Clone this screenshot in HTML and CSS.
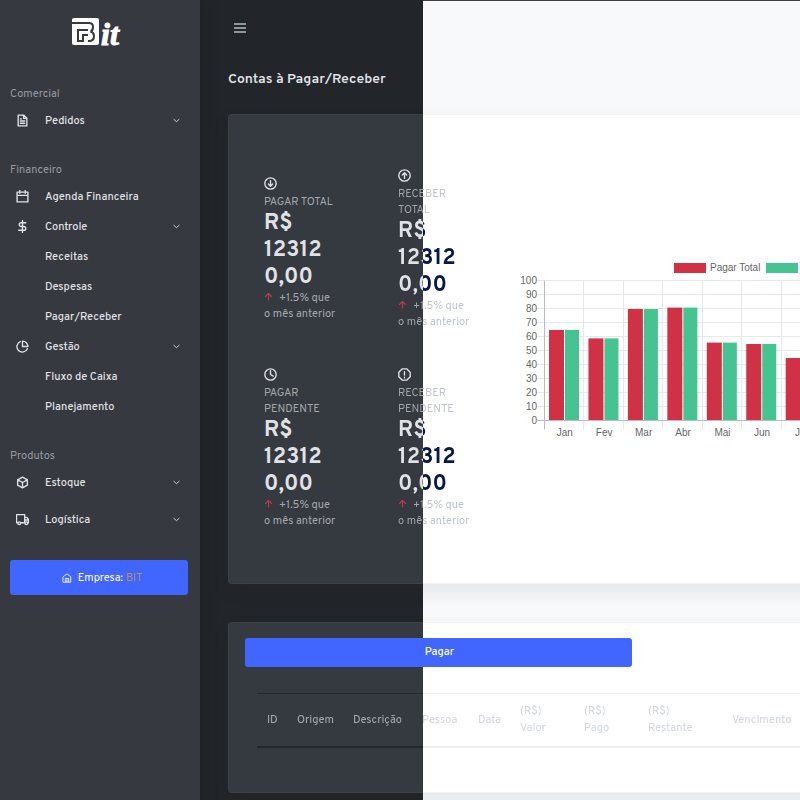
FILE: index.html
```html
<!DOCTYPE html>
<html lang="pt-BR">
<head>
<meta charset="utf-8">
<meta name="viewport" content="width=device-width, initial-scale=1">
<title>Contas à Pagar/Receber</title>
<link rel="stylesheet" href="styles.css">
</head>
<body>
<svg class="defs" aria-hidden="true">
  <symbol id="chevron" viewBox="0 0 24 24"><path d="M3 8l9 8 9-8"/></symbol>
  <symbol id="up" viewBox="0 0 24 24"><path d="M12 21V4M4 12l8-8 8 8"/></symbol>
</svg>
<div class="layout">
  <aside class="sidebar">
    <a class="logo" href="#" aria-label="Bit">
      <svg viewBox="0 0 27 27" width="27" height="27"><rect width="27" height="27" rx="2"/><path d="M0 5H17q4 0 4 4t-2.500 4.500q3.500 1 3.500 4.500 0 5-5 5h-1M6 12h10M6 11v12h5v-6h5"/></svg>
      <span>it</span>
    </a>
    <nav>
      <section class="group">
        <h2>Comercial</h2>
        <ul>
          <li><a href="#"><svg class="icon" viewBox="0 0 24 24"><path d="M14 2H4v20h16V8zM14 2v6h6M8 9h2M8 13h8M8 17h8"/></svg>Pedidos<svg class="chev"><use href="#chevron"/></svg></a></li>
        </ul>
      </section>
      <section class="group">
        <h2>Financeiro</h2>
        <ul>
          <li><a href="#"><svg class="icon" viewBox="0 0 24 24"><path d="M2 4h20v18H2zM2 10h20M7 1v5M17 1v5"/></svg>Agenda Financeira</a></li>
          <li><a href="#"><svg class="icon" viewBox="0 0 24 24"><path d="M12 1v22M18 5H9.500a3.500 3.500 0 0 0 0 7h5a3.500 3.500 0 0 1 0 7H5"/></svg>Controle<svg class="chev"><use href="#chevron"/></svg></a></li>
          <li><a class="sub" href="#">Receitas</a></li>
          <li><a class="sub" href="#">Despesas</a></li>
          <li><a class="sub" href="#">Pagar/Receber</a></li>
          <li><a href="#"><svg class="icon" viewBox="0 0 24 24"><path d="M21 16A10 10 0 1 1 8 3M22 12A10 10 0 0 0 12 2v10z"/></svg>Gestão<svg class="chev"><use href="#chevron"/></svg></a></li>
          <li><a class="sub" href="#">Fluxo de Caixa</a></li>
          <li><a class="sub" href="#">Planejamento</a></li>
        </ul>
      </section>
      <section class="group">
        <h2>Produtos</h2>
        <ul class="spaced">
          <li><a href="#"><svg class="icon" viewBox="0 0 24 24"><path d="M12 2l9 5v10l-9 5-9-5V7zM3 7l9 5 9-5M12 12v10"/></svg>Estoque<svg class="chev"><use href="#chevron"/></svg></a></li>
          <li><a href="#"><svg class="icon" viewBox="0 0 24 24"><path d="M3 18H1V3h15v15H9M16 8h4l3 4v6h-1M16 18v-5h7"/><circle cx="6" cy="19" r="2.500"/><circle cx="19" cy="19" r="2.500"/></svg>Logística<svg class="chev"><use href="#chevron"/></svg></a></li>
        </ul>
      </section>
    </nav>
    <button class="btn company" type="button"><svg viewBox="0 0 24 24"><path d="M3 9l9-7 9 7v13H3zM8 22v-9h8v9M12 14v8"/></svg><span>Empresa: <b>BIT</b></span></button>
  </aside>
  <main class="main">
    <button class="menu" type="button" aria-label="Menu"><i></i><i></i><i></i></button>
    <h1>Contas à Pagar/Receber</h1>
    <div class="content">
      <section class="card summary">
        <div class="metrics">
          <article>
            <svg class="micon" viewBox="0 0 24 24"><circle cx="12" cy="12" r="10.500"/><path d="M12 7v10M8 13l4 4 4-4"/></svg>
            <h3>PAGAR TOTAL</h3>
            <p class="value">R$<br>12312<br>0,00</p>
            <p class="note"><svg><use href="#up"/></svg>+1.5% que<br>o mês anterior</p>
          </article>
          <article>
            <svg class="micon" viewBox="0 0 24 24"><circle cx="12" cy="12" r="10.500"/><path d="M12 17V7M8 11l4-4 4 4"/></svg>
            <h3 class="split muted">RECEBER<br>TOTAL</h3>
            <p class="value split strong">R$<br>12312<br>0,00</p>
            <p class="note split muted"><svg><use href="#up"/></svg>+1.5% que<br>o mês anterior</p>
          </article>
          <article>
            <svg class="micon" viewBox="0 0 24 24"><circle cx="12" cy="12" r="10.500"/><path d="M12 5v7l5 3"/></svg>
            <h3>PAGAR<br>PENDENTE</h3>
            <p class="value">R$<br>12312<br>0,00</p>
            <p class="note"><svg><use href="#up"/></svg>+1.5% que<br>o mês anterior</p>
          </article>
          <article>
            <svg class="micon" viewBox="0 0 24 24"><path d="M8 1.500h8L22.500 8v8L16 22.500H8L1.500 16V8zM12 7v6M12 17v1"/></svg>
            <h3 class="split muted">RECEBER<br>PENDENTE</h3>
            <p class="value split strong">R$<br>12312<br>0,00</p>
            <p class="note split muted"><svg><use href="#up"/></svg>+1.5% que<br>o mês anterior</p>
          </article>
        </div>
        <svg class="chart" id="chart" width="312" height="190" role="img" aria-label="Pagar Total por mês"></svg>
      </section>
      <section class="card">
        <button class="btn pay" type="button">Pagar</button>
        <div class="rules">
          <table>
            <colgroup><col class="c30"><col class="c56"><col class="c69"><col class="c56"><col class="c42"><col class="c64"><col class="c64"><col class="c84"><col></colgroup>
            <thead><tr class="split faint"><th>ID</th><th>Origem</th><th>Descrição</th><th>Pessoa</th><th>Data</th><th>(R$)<br>Valor</th><th>(R$)<br>Pago</th><th>(R$)<br>Restante</th><th>Vencimento</th></tr></thead>
          </table>
        </div>
      </section>
    </div>
  </main>
</div>
<script src="chart.js"></script>
</body>
</html>
```
FILE: styles.css
```css
:root {
  --seam: 52.9vw;
  --blue: #4166ff;
  --page: linear-gradient(90deg, #222529 var(--seam), #f8f9fb var(--seam)) fixed;
  --topline: linear-gradient(90deg, transparent var(--seam), #453f42 var(--seam)) 0 0 / 100% 1px no-repeat fixed;
  --card: linear-gradient(90deg, #353a40 var(--seam), #fff var(--seam)) fixed;
  --rule: linear-gradient(90deg, #25292d var(--seam), #eceef1 var(--seam)) fixed;
}
* { box-sizing: border-box; margin: 0; padding: 0; }
body { font: 11px/16px Overpass, Roboto, sans-serif; color: #e0e2e5; background: #222529; }
.defs { display: none; }
svg { fill: none; stroke: currentColor; stroke-width: 2; stroke-linecap: round; stroke-linejoin: round; }
.layout { display: flex; min-height: 100vh; }
.sidebar { flex: 0 0 200px; background: #363940; padding: 0 12px 20px 10px; box-shadow: 0 0 12px #1d1f22; z-index: 1; }
.logo { display: flex; align-items: flex-end; gap: 2px; margin: 0 0 37px 62px; padding-top: 17px; height: 45px; color: #fff; text-decoration: none; }
.logo rect { fill: #fff; stroke: none; }
.logo path { stroke: #363940; stroke-linecap: butt; stroke-linejoin: miter; }
.logo span { font: italic bold 32px/22px "Liberation Serif", serif; -webkit-text-stroke: 1px #fff; }
.group { margin-bottom: 22px; }
h2 { font-size: 11px; font-weight: 400; line-height: 24px; color: #9599a0; }
ul { list-style: none; }
.spaced { display: grid; gap: 7px; }
.sidebar li a { display: flex; align-items: center; height: 30px; padding: 0 8px 0 6px; color: inherit; text-decoration: none; font-weight: 500; }
.sidebar li .sub { padding-left: 35px; }
.icon { width: 13px; height: 13px; margin: 0 16px 2px 0; stroke-width: 2.5; }
.chev { width: 7px; height: 7px; margin: 0 0 2px auto; stroke-width: 3; }
.btn { border: 0; border-radius: 3px; background: var(--blue); color: #fff; font: 500 11px/16px Overpass, Roboto, sans-serif; }
.company { display: flex; width: 100%; height: 35px; margin-top: 25px; align-items: center; justify-content: center; gap: 6px; padding-left: 6px; font-weight: 400; }
.company svg { width: 10px; height: 10px; }
.company b { font-weight: 400; color: #b08e5e; }
.main { flex: 1; min-width: 0; overflow: hidden; padding: 0 28px; background: var(--topline), var(--page); }
.menu { display: grid; gap: 2px; width: 12px; margin: 23px 0 0 6px; border: 0; background: none; }
.menu i { height: 2px; background: #8f9899; }
h1 { margin: 37px 0 24px; font-size: 14px; line-height: 20px; font-weight: 600; }
.content { min-width: 808px; }
.card { margin-bottom: 38px; padding: 15px 16px; border: 1px solid rgba(120, 130, 150, .1); border-radius: 4px; background: var(--card); box-shadow: 0 8px 18px rgba(30, 34, 34, .09); }
.summary { display: flex; align-items: center; padding: 54px 35px; }
.metrics { display: grid; grid-template-columns: 134px 122px; row-gap: 38px; align-items: center; }
.micon { display: block; width: 13px; height: 13px; margin-bottom: 4px; stroke-width: 2.5; }
h3, .note { font-size: 11px; line-height: 16px; font-weight: 400; color: #a3a7ac; }
.value { font-size: 22px; line-height: 27px; font-weight: 700; }
.note { margin-top: -1px; }
.note svg { width: 9px; height: 9px; margin-right: 6px; stroke-width: 3; color: #c73549; }
.split { color: transparent; background: linear-gradient(90deg, var(--l) var(--seam), var(--r) var(--seam)) fixed text; }
.muted { --l: #a3a7ac; --r: #bcc1cb; }
.strong { --l: #e0e2e5; --r: #06174e; }
.chart { flex: none; font: 10px "Liberation Sans", Arial, sans-serif; }
.chart text { fill: #666; stroke: none; }
.chart .grid { stroke: #e8e8e8; stroke-width: 1; }
.chart .axis { stroke: #bbb; stroke-width: 1; }
.chart rect { stroke: none; }
.red { fill: #d03145; }
.green { fill: #45c391; }
.pay { display: block; width: 50%; height: 29px; padding: 0 0 2px 2px; }
.rules { margin: 26px 12px 29px; padding: 1px 0 2px; background: var(--rule); }
table { width: 100%; border-collapse: collapse; table-layout: fixed; background: var(--card); }
th { height: 52px; padding: 0 0 0 10px; text-align: left; font-weight: 500; line-height: 17px; }
.faint { --l: #a3a7ac; --r: #d3d7de; }
.c30 { width: 30px; } .c42 { width: 42px; } .c56 { width: 56px; } .c64 { width: 64px; } .c69 { width: 69px; } .c84 { width: 84px; }
```
FILE: chart.js
```js
const months = ["Jan", "Fev", "Mar", "Abr", "Mai", "Jun", "Jul"];
const values = [65, 59, 80, 81, 56, 55, 45];
const left = 25, top0 = 27, bottom = 167, step = 39.45;
const y = v => bottom - v * 1.4;
let out = "";
for (let v = 0; v <= 100; v += 10) {
  out += `<path class="grid" d="M17 ${Math.round(y(v)) - 0.5}H312"/><text x="17" y="${y(v) + 3}" text-anchor="end">${v}</text>`;
}
months.forEach((m, i) => {
  const x = left + i * step;
  out += `<path class="grid" d="M${Math.round(x) - 0.5} ${top0}V175"/>`;
  out += `<rect class="red" x="${x + 4}" y="${y(values[i])}" width="15" height="${values[i] * 1.4}"/>`;
  out += `<rect class="green" x="${x + 20}" y="${y(values[i])}" width="14" height="${values[i] * 1.4}"/>`;
  out += `<text x="${x + step / 2}" y="182" text-anchor="middle">${m}</text>`;
});
out += `<path class="axis" d="M17 ${bottom - 0.5}H312M24.500 ${top0}V175"/>`;
out += `<rect class="red" x="154" y="9" width="32" height="10"/><text x="190" y="17">Pagar Total</text><rect class="green" x="246" y="9" width="32" height="10"/>`;
document.getElementById("chart").innerHTML = out;
```
